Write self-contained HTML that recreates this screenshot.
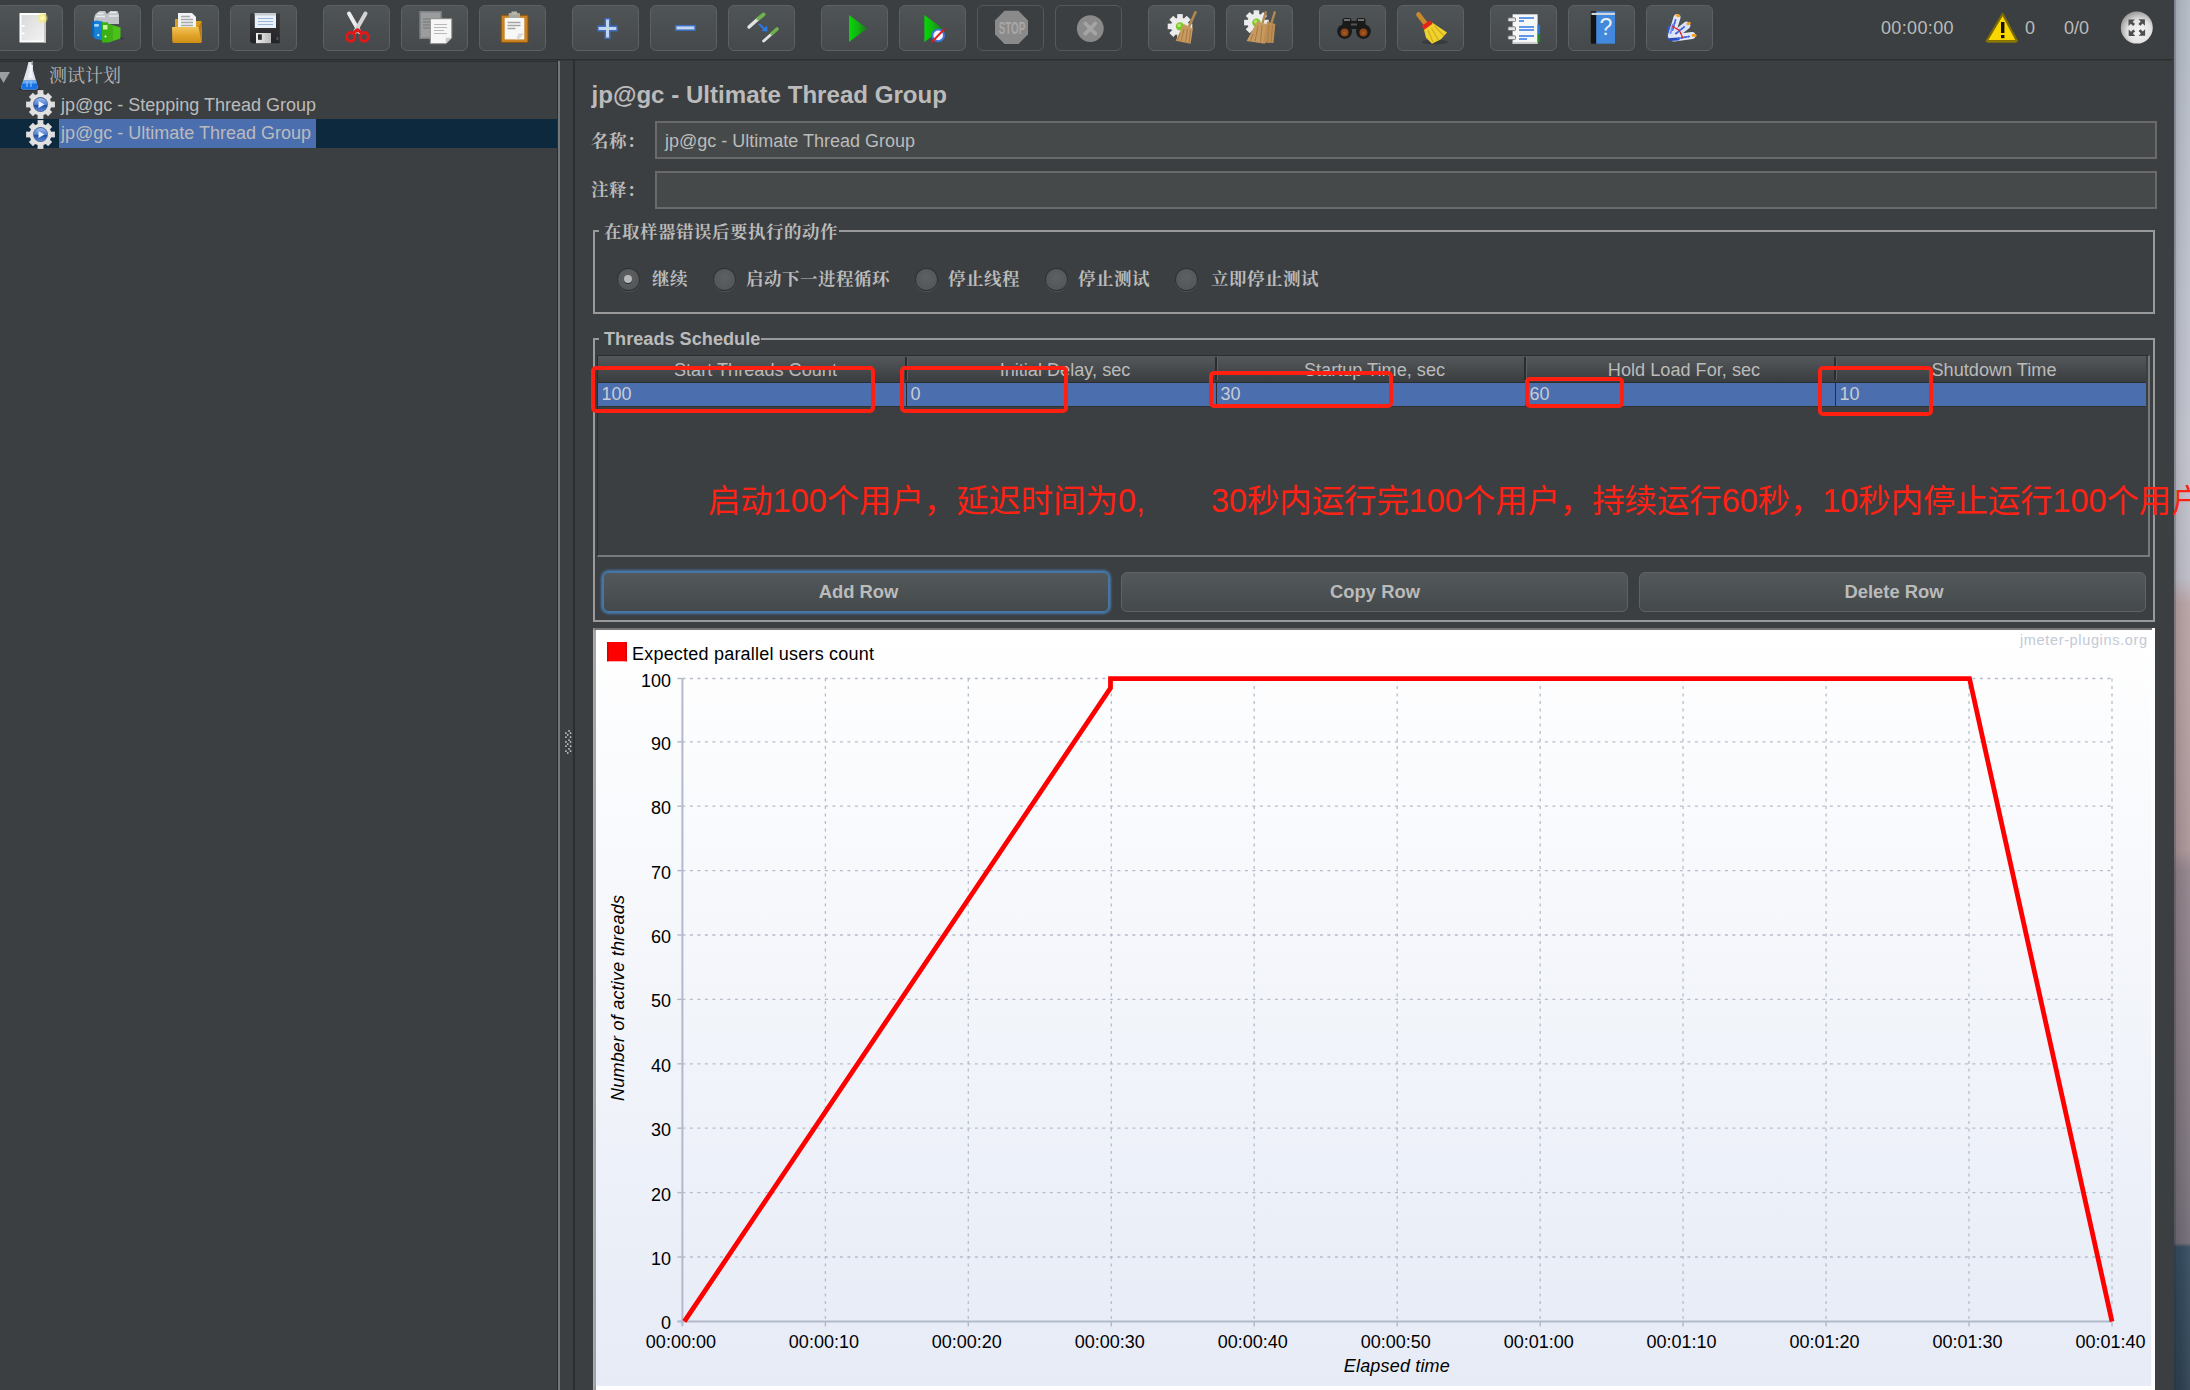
<!DOCTYPE html>
<html lang="zh-CN"><head><meta charset="utf-8"><title>JMeter - Ultimate Thread Group</title>
<style>
html,body{margin:0;padding:0;background:#3c3f41;}
body{width:2190px;height:1390px;overflow:hidden;position:relative;font-family:"Liberation Sans","Noto Sans CJK SC",sans-serif;font-size:18px;color:#bbbbbb;}
#app{position:absolute;left:0;top:0;width:2190px;height:1390px;overflow:hidden;background:#3c3f41;}
.abs{position:absolute;}
.t{position:absolute;white-space:nowrap;line-height:22px;height:22px;}
.cn{font-family:"Liberation Sans","Noto Serif CJK SC",serif;font-weight:700;font-size:17.5px;letter-spacing:.5px;}
.cnr{font-family:"Liberation Sans","Noto Serif CJK SC",serif;font-weight:400;}
.tb{position:absolute;top:5px;width:65px;height:44px;border:1px solid #5c6062;border-radius:6px;background:linear-gradient(#4f5456,#45494b);box-sizing:content-box;}
.tb svg{position:absolute;left:0;top:0;}
.field{position:absolute;left:655px;width:1498px;height:34px;border:2px solid #6a6a6a;background:#45494a;box-sizing:content-box;}
.gb{position:absolute;border:2px solid #9a9a9a;box-sizing:border-box;}
.gbt{position:absolute;background:#3c3f41;padding:0 1px 0 5px;white-space:nowrap;line-height:22px;}
.radio{position:absolute;width:21px;height:21px;border-radius:50%;background:radial-gradient(circle at 50% 40%,#5e6163,#505355);box-shadow:0 0 0 1px #2e3032, 0 1px 1px 1px rgba(90,94,96,.6);}
.radio.on::after{content:"";position:absolute;left:6.5px;top:6.5px;width:8px;height:8px;border-radius:50%;background:#b8b8b8;box-shadow:0 1px 0 #2a2a2a;}
.th{position:absolute;top:356px;height:26px;background:linear-gradient(#54585a,#3b3e40);text-align:center;line-height:27px;white-space:nowrap;}
.td{position:absolute;top:383px;height:23px;background:#4b6eaf;line-height:23px;white-space:nowrap;}
.btn{position:absolute;top:572px;height:40px;border-radius:6px;border:1px solid #5f6365;background:linear-gradient(#53585a,#44494b);text-align:center;font-weight:700;font-size:18.4px;line-height:37px;box-sizing:border-box;}
.red{position:absolute;border:4.8px solid #ff2012;border-radius:5px;box-sizing:border-box;}
.redt{position:absolute;color:#ff2214;font-family:"Liberation Sans","Noto Sans CJK SC",sans-serif;font-size:32.37px;white-space:nowrap;line-height:40px;}
</style></head>
<body><div id="app">
<div class="abs" style="left:2174px;top:0;width:16px;height:1390px;background:linear-gradient(#b3b9c3 0px,#bcc0ca 300px,#c0c1cb 450px,#bcbbc5 578px,#b8a2a3 604px,#b49e9f 700px,#aa9496 850px,#92838a 870px,#887b83 1000px,#7c737b 1150px,#716b75 1243px,#364c5e 1247px,#2e4151 1390px);"></div>
<div class="abs" style="left:2174px;top:0;width:16px;height:1390px;background:linear-gradient(90deg,rgba(10,20,40,.13),rgba(10,20,40,.04) 45%,rgba(255,255,255,.05));"></div>
<div class="abs" style="left:2174px;top:0;width:2px;height:1390px;background:rgba(40,44,52,.25);"></div>
<div class="abs" style="left:0;top:59px;width:2172px;height:1px;background:#2a2c2e;"></div><div class="abs" style="left:0;top:60px;width:2172px;height:1px;background:#35383a;"></div>
<div class="tb" style="left:-4px"><svg width="66" height="44" viewBox="0 0 66 44"><defs><linearGradient id="pg" x1="0" y1="0" x2="1" y2="1"><stop offset="0" stop-color="#d9d9d9"/><stop offset="1" stop-color="#f3f3f3"/></linearGradient><radialGradient id="st"><stop offset="0" stop-color="#fffde0"/><stop offset=".45" stop-color="#f6ee8a"/><stop offset="1" stop-color="#f3e96a" stop-opacity="0"/></radialGradient></defs><rect x="22.500" y="7" width="26.500" height="29.500" fill="#fdfdfd"/><rect x="24.500" y="9" width="22.500" height="25.500" fill="url(#pg)"/><rect x="47" y="8" width="2" height="28.500" fill="#c9c9c4"/><rect x="25" y="19" width="2.500" height="2" fill="#fff"/><rect x="25" y="26.500" width="2.500" height="2" fill="#fff"/><circle cx="45.400" cy="12.200" r="6" fill="url(#st)"/></svg></div>
<div class="tb" style="left:74px"><svg width="66" height="44" viewBox="0 0 66 44"><path d="M19 12 l1.500 -4 4 -3 h5.500 l2 3 1.500 -1.500 2 -1.500 h7 l1.500 3.500 v9.500 h-25z" fill="#bfc3c7"/><path d="M22.500 7.500 h6 M35 6.500 h6.500 M21 10.500 h9 M34 10 h9" stroke="#e9ebed" stroke-width="1.300"/><path d="M17.100 15.500 l4.500 -1 6.100 1 v19 l-7.500 -1.800 -3.100 -2.700z" fill="#1680d4"/><path d="M17.100 15.500 l2 -.5 v16.500 l-2 -1.500z" fill="#0f62ae"/><rect x="19.200" y="18" width="4.600" height="2.700" fill="#a6d4f6"/><rect x="22.300" y="28.200" width="1.900" height="1.900" fill="#d6eafa"/><path d="M27 16.300 h6.200 v20.200 h-6.200z" fill="#37b212"/><rect x="28" y="19" width="4.500" height="4.500" fill="#c9f2a2"/><circle cx="30.500" cy="30.600" r="1" fill="#fff"/><path d="M33.200 18 L45.500 21.400 V32.400 L33.200 36.500z" fill="#4bc21a"/><path d="M33.200 18 L38 19.300 V34.900 L33.200 36.500z" fill="#40b014"/><path d="M45.500 31 l4 1.500 -4 1.500z" fill="#2c2e30" opacity=".6"/></svg></div>
<div class="tb" style="left:152px"><svg width="66" height="44" viewBox="0 0 66 44"><defs><linearGradient id="fo" x1="0" y1="0" x2="0" y2="1"><stop offset="0" stop-color="#f0c55c"/><stop offset=".5" stop-color="#e2a52c"/><stop offset="1" stop-color="#cf8e14"/></linearGradient></defs><path d="M22 13 h6 l2 2 h18.500 v21 h-26.500z" fill="#d99a1e"/><path d="M25 7 h14 l4 4 v12 h-18z" fill="#f2f3f4"/><path d="M28 10.500h9M28 13.500h12M28 16.500h12M28 19.500h12" stroke="#a9a9a9" stroke-width="1.700"/><path d="M19 21 h26.500 l3 2 v13 q0 1 -1 1 h-26.500 q-1.500 0 -1.700 -1.500z" fill="url(#fo)"/><path d="M45.500 21 l3 -6 v21z" fill="#b87a10"/></svg></div>
<div class="tb" style="left:230px"><svg width="66" height="44" viewBox="0 0 66 44"><defs><linearGradient id="fl" x1="0" y1="0" x2="0" y2="1"><stop offset="0" stop-color="#3a3a3e"/><stop offset="1" stop-color="#232326"/></linearGradient><linearGradient id="mt" x1="0" y1="0" x2="1" y2="0"><stop offset="0" stop-color="#f0f0f0"/><stop offset="1" stop-color="#b8b8b8"/></linearGradient></defs><path d="M19 7.500 h29.800 v29.700 h-28 l-1.800 -1.800z" fill="url(#fl)"/><rect x="23.800" y="7" width="21.200" height="15" fill="#e9f0f8"/><rect x="23.800" y="7" width="21.200" height="2.500" fill="#c9ccd0"/><path d="M27 12.500h15M27 15.500h15M27 18.500h15" stroke="#9ab6d6" stroke-width="1.200"/><rect x="25" y="27" width="15" height="10.200" fill="url(#mt)"/><rect x="27" y="28.300" width="3.800" height="5.500" fill="#2a2a2d"/><rect x="45.500" y="31" width="1.800" height="3" fill="#55555a"/></svg></div>
<div class="tb" style="left:323px"><svg width="66" height="44" viewBox="0 0 66 44"><g stroke-linecap="round" fill="none"><path d="M25 7.500 L35.500 26" stroke="#ececec" stroke-width="4"/><path d="M41.500 7.500 L31 26" stroke="#d4d4d4" stroke-width="4"/><ellipse cx="26.700" cy="30.800" rx="4" ry="4.400" stroke="#e01818" stroke-width="3"/><ellipse cx="40.300" cy="30.800" rx="4" ry="4.400" stroke="#e01818" stroke-width="3"/><path d="M30 26.500 L33 24 M37 26.500 L34 24" stroke="#e01818" stroke-width="3.200"/></g></svg></div>
<div class="tb" style="left:401px"><svg width="66" height="44" viewBox="0 0 66 44"><rect x="17.300" y="5" width="22.500" height="28" fill="#7f8183"/><rect x="18.800" y="6.500" width="19.500" height="25" fill="#9a9c9e"/><path d="M21 13h8M21 16h8M21 19h8M21 22h8" stroke="#808284" stroke-width="1.300"/><path d="M28.300 12.700 h21.500 v19 l-6 6 h-15.500z" fill="#f6f6f6" stroke="#8a8a84" stroke-width="1"/><path d="M49.800 31.700 l-6 6 v-6z" fill="#c9c9c9"/><path d="M32 18.500h13M32 21.500h13M32 24.500h10M32 27.500h13" stroke="#b9b9b9" stroke-width="1.200"/></svg></div>
<div class="tb" style="left:479px"><svg width="66" height="44" viewBox="0 0 66 44"><rect x="21.200" y="9.200" width="26.800" height="27.300" rx="1.500" fill="#c98324" stroke="#8a5208" stroke-width="1"/><rect x="24.700" y="11.900" width="19.600" height="21.500" fill="#f7f7f7"/><rect x="28.600" y="7" width="11.400" height="5" rx="1" fill="#a8a89c"/><rect x="31.500" y="5.500" width="5.600" height="3" fill="#b8b8ac"/><path d="M27.500 16.500h13M27.500 19.500h13M27.500 22.500h8" stroke="#a4a4a4" stroke-width="1.700"/><path d="M44.300 27.400 l-6 6 h-2 l2 -6z" fill="#d9d9d6"/></svg></div>
<div class="tb" style="left:572px"><svg width="66" height="44" viewBox="0 0 66 44"><path d="M24.200 22.400 h20.600 M34.500 12 v21" stroke="#3c6fc4" stroke-width="6" fill="none"/><path d="M25.700 22.400 h17.600 M34.500 13.500 v18" stroke="#c3d6f0" stroke-width="3" fill="none"/></svg></div>
<div class="tb" style="left:650px"><svg width="66" height="44" viewBox="0 0 66 44"><path d="M24 21.900 h20.800" stroke="#3c6fc4" stroke-width="6" fill="none"/><path d="M25.500 21.900 h17.800" stroke="#c3d6f0" stroke-width="3" fill="none"/></svg></div>
<div class="tb" style="left:728px"><svg width="66" height="44" viewBox="0 0 66 44"><g stroke-linecap="round" fill="none"><path d="M20 21 L29 13" stroke="#e2e2e2" stroke-width="3.400"/><path d="M29.500 12.500 L34.500 8.500" stroke="#6fb24e" stroke-width="4"/><path d="M34.700 35 L42.500 28" stroke="#e2e2e2" stroke-width="3"/><path d="M43 27.500 L48 23" stroke="#6fb24e" stroke-width="3.600"/><path d="M30.500 18.500 L35.500 23" stroke="#2a7be8" stroke-width="1.800"/></g><path d="M38.500 25.500 l-6 -.5 5.500 -5.500z" fill="#2a7be8"/></svg></div>
<div class="tb" style="left:821px"><svg width="66" height="44" viewBox="0 0 66 44"><defs><linearGradient id="gr" x1="0" y1="0" x2="1" y2="0"><stop offset="0" stop-color="#06d806"/><stop offset=".5" stop-color="#12b012"/><stop offset="1" stop-color="#167a16"/></linearGradient></defs><path d="M27 9 L27 35.900 L45.200 22.400 Z" fill="url(#gr)"/></svg></div>
<div class="tb" style="left:899px"><svg width="66" height="44" viewBox="0 0 66 44"><defs><linearGradient id="gr2" x1="0" y1="0" x2="1" y2="0"><stop offset="0" stop-color="#06d806"/><stop offset=".5" stop-color="#12b012"/><stop offset="1" stop-color="#167a16"/></linearGradient></defs><path d="M24.400 9 L24.400 35.900 L42.600 22.400 Z" fill="url(#gr2)"/><circle cx="38.200" cy="29.400" r="5.800" fill="#f4f6fc" stroke="#3f74d6" stroke-width="2"/><path d="M31.800 36 L44.500 23" stroke="#e01c1c" stroke-width="1.800"/></svg></div>
<div class="tb" style="left:977px;background:none;border-color:#55595b"><svg width="66" height="44" viewBox="0 0 66 44"><path d="M26.500 4.800 h14 l9.500 9.700 v13.800 l-9.500 9.700 h-14 l-9.500 -9.700 v-13.800z" fill="#8a8a8a"/><text x="34" y="28" font-family="Liberation Sans,sans-serif" font-size="16" font-weight="700" fill="#a8a8a8" text-anchor="middle" textLength="26.500" lengthAdjust="spacingAndGlyphs">STOP</text></svg></div>
<div class="tb" style="left:1055px;background:none;border-color:#55595b"><svg width="66" height="44" viewBox="0 0 66 44"><circle cx="34.300" cy="22.600" r="13.400" fill="#8a8a8a"/><path d="M29.300 17.500 L39.300 27.700 M39.300 17.500 L29.300 27.700" stroke="#a4a4a4" stroke-width="3.800" stroke-linecap="round"/></svg></div>
<div class="tb" style="left:1148px"><svg width="66" height="44" viewBox="0 0 66 44"><g transform="translate(31,20.4)"><g fill="#ececec"><rect x="-2.800" y="-12.300" width="5.600" height="6" transform="rotate(0)"/><rect x="-2.800" y="-12.300" width="5.600" height="6" transform="rotate(45)"/><rect x="-2.800" y="-12.300" width="5.600" height="6" transform="rotate(90)"/><rect x="-2.800" y="-12.300" width="5.600" height="6" transform="rotate(135)"/><rect x="-2.800" y="-12.300" width="5.600" height="6" transform="rotate(180)"/><rect x="-2.800" y="-12.300" width="5.600" height="6" transform="rotate(225)"/><rect x="-2.800" y="-12.300" width="5.600" height="6" transform="rotate(270)"/><rect x="-2.800" y="-12.300" width="5.600" height="6" transform="rotate(315)"/></g><circle r="9" fill="#ececec"/><circle r="4.200" fill="#7cc62a"/><circle cx="-.8" cy="-1" r="1.800" fill="#b4e470"/></g><path d="M46.900 5.300 L39.500 22" stroke="#b08850" stroke-width="2.600"/><path d="M34.800 18.100 L43.900 22.600 L41.600 37.700 L26.600 34.700z" fill="#c79a62"/><path d="M31 27 l-2.500 7.500 M35 23 l-3 12.500 M38.500 23 l-2 14 M41.500 24 l-1.500 13" stroke="#a87a42" stroke-width="1"/></svg></div>
<div class="tb" style="left:1226px"><svg width="66" height="44" viewBox="0 0 66 44"><g transform="translate(29.4,16.6)"><g fill="#ececec"><rect x="-2.800" y="-12.300" width="5.600" height="6" transform="rotate(0)"/><rect x="-2.800" y="-12.300" width="5.600" height="6" transform="rotate(45)"/><rect x="-2.800" y="-12.300" width="5.600" height="6" transform="rotate(90)"/><rect x="-2.800" y="-12.300" width="5.600" height="6" transform="rotate(135)"/><rect x="-2.800" y="-12.300" width="5.600" height="6" transform="rotate(180)"/><rect x="-2.800" y="-12.300" width="5.600" height="6" transform="rotate(225)"/><rect x="-2.800" y="-12.300" width="5.600" height="6" transform="rotate(270)"/><rect x="-2.800" y="-12.300" width="5.600" height="6" transform="rotate(315)"/></g><circle r="9" fill="#ececec"/><circle r="4.200" fill="#7cc62a"/><circle cx="-.8" cy="-1" r="1.800" fill="#b4e470"/></g><path d="M39 5.300 L35.500 17" stroke="#b08850" stroke-width="2.400"/><path d="M48 5.300 L44.500 17" stroke="#b08850" stroke-width="2.400"/><path d="M30 15.500 L39.500 18 L38 37.700 L19.600 35z" fill="#c79a62"/><path d="M40 15.500 L48.300 18 L46.500 37 L36 36.500z" fill="#bd8e54"/><path d="M26 28 l-2.500 7 M31 20 l-3 15.500 M35 19 l-1.500 17.500 M42 19 l-1.500 17.500 M45.500 19 l-1.500 18" stroke="#a87a42" stroke-width="1"/></svg></div>
<div class="tb" style="left:1319px"><svg width="66" height="44" viewBox="0 0 66 44"><g fill="#1a1a1a"><rect x="22.500" y="12" width="9" height="9" rx="2.500"/><rect x="36.500" y="12" width="9" height="9" rx="2.500"/><rect x="29" y="15" width="10" height="8"/><circle cx="24.600" cy="25.600" r="7.400"/><circle cx="43.400" cy="25.600" r="7.400"/></g><path d="M24 14 h6 M38 14 h6" stroke="#8a8a8a" stroke-width="1.500"/><path d="M31 18.500 h6" stroke="#555" stroke-width="2"/><circle cx="24.600" cy="26.500" r="4" fill="#8e4718"/><circle cx="43.400" cy="26.500" r="4" fill="#8e4718"/><circle cx="24.600" cy="27" r="1.800" fill="#a85a22"/><circle cx="43.400" cy="27" r="1.800" fill="#a85a22"/></svg></div>
<div class="tb" style="left:1397px"><svg width="66" height="44" viewBox="0 0 66 44"><ellipse cx="37" cy="36" rx="13" ry="2.500" fill="#2e3032" opacity=".55"/><path d="M20.500 8.500 L28.500 19" stroke="#c88a2c" stroke-width="4.600" stroke-linecap="round"/><path d="M25.700 22.600 L34 16.600 L49 26.400 L43 33.200 L34 37.700 L28 31.700z" fill="#f0d22e"/><path d="M30 24 l5 12 M33.500 22 l7 12.500 M36.500 20 l9.500 10" stroke="#d2ae18" stroke-width="1.200"/><path d="M25 21.900 L33.200 15.900" stroke="#e42418" stroke-width="4.400"/></svg></div>
<div class="tb" style="left:1490px"><svg width="66" height="44" viewBox="0 0 66 44"><rect x="21.600" y="8.300" width="25" height="29.400" fill="#f7f7f7"/><rect x="21.600" y="36" width="25" height="1.700" fill="#cfcfcf"/><rect x="46.500" y="18.900" width="2.600" height="9" fill="#2b74dc"/><rect x="46.500" y="27.900" width="2.600" height="8.300" fill="#1f8a1f"/><g stroke="#2f7be8" stroke-width="1.300"><path d="M28 12h15M28 15h5M28 21h15M28 24h15M28 30h15M28 33h8"/></g><g fill="#e4e4e4" stroke="#666" stroke-width=".8"><rect x="17" y="11.800" width="7.500" height="3.800" rx="1"/><rect x="17" y="20.800" width="7.500" height="3.800" rx="1"/><rect x="17" y="29.800" width="7.500" height="3.800" rx="1"/></g></svg></div>
<div class="tb" style="left:1568px"><svg width="66" height="44" viewBox="0 0 66 44"><rect x="27" y="5.300" width="19" height="32.400" fill="#4288dc"/><rect x="21.800" y="5.300" width="5.400" height="32.400" fill="#141414"/><rect x="22.500" y="6.800" width="23.400" height="2.200" fill="#cfd6de"/><text x="36.800" y="29.400" font-family="Liberation Sans,sans-serif" font-size="23" fill="#e6effb" text-anchor="middle">?</text><rect x="35.600" y="30.800" width="2.400" height="2.400" fill="#d5e4f8" opacity="0"/></svg></div>
<div class="tb" style="left:1646px"><svg width="66" height="44" viewBox="0 0 66 44"><g stroke-linecap="round" fill="none"><path d="M22.500 31 L23 22" stroke="#3558cc" stroke-width="5"/><path d="M24.500 29.500 L30 11.500" stroke="#e2e8f8" stroke-width="7"/><path d="M26.500 30 L39.500 19.500" stroke="#d9e1f6" stroke-width="7.500"/><path d="M27 32 L45 29.500" stroke="#e4e9f8" stroke-width="7"/><path d="M23.500 33.500 L31 33" stroke="#2a4cc0" stroke-width="3.200"/><path d="M25.500 24 L28.500 14 M29 27.500 L37 21 M31 32.500 L42 30.500" stroke="#3f66de" stroke-width="2" stroke-dasharray="1.600 1.800"/><path d="M23.500 27 L26 18" stroke="#6f8fe8" stroke-width="2" stroke-dasharray="1.500 2"/><path d="M25.500 20.500 L32.500 24.500 L36 32.500" stroke="#d62a2a" stroke-width="1.500" stroke-dasharray="2 1.400"/><path d="M30.300 9.500 l1.400 .4 M40.800 17.800 l1.600 -.6 M46 29.300 l2.300 .2" stroke="#f2a020" stroke-width="2.800"/></g></svg></div>
<div class="t" style="left:1881px;top:17px;letter-spacing:.35px;">00:00:00</div>
<svg class="abs" style="left:1984px;top:11px;" width="36" height="34" viewBox="0 0 36 34"><path d="M18.700 3 L33 30 H2.500 Z" fill="#f8d800" stroke="#7e6c00" stroke-width="2.200" stroke-linejoin="round"/><path d="M3 30.500 h29.500" stroke="#8a7800" stroke-width="2.400"/><rect x="17" y="11" width="3.400" height="11" fill="#111"/><rect x="17" y="24" width="3.400" height="3.200" fill="#111"/></svg>
<div class="t" style="left:2025px;top:17px;">0</div>
<div class="t" style="left:2064px;top:17px;">0/0</div>
<svg class="abs" style="left:2119px;top:10px;" width="36" height="36" viewBox="0 0 36 36"><defs><radialGradient id="cg2" cx=".58" cy=".62" r=".62"><stop offset="0" stop-color="#f6f6f6"/><stop offset=".6" stop-color="#e2e2e2"/><stop offset="1" stop-color="#9e9e9e"/></radialGradient></defs><circle cx="17.800" cy="17.600" r="16" fill="url(#cg2)"/><g fill="#4e4e4e"><path d="M9.500 9.500 h6.500 l-2.300 2.300 2.300 2.300 -1.900 1.900 -2.300 -2.300 -2.300 2.300z" transform="rotate(0 17.800 17.600)"/><path d="M9.500 9.500 h6.500 l-2.300 2.300 2.300 2.300 -1.900 1.900 -2.300 -2.300 -2.300 2.300z" transform="rotate(90 17.800 17.600)"/><path d="M9.500 9.500 h6.500 l-2.300 2.300 2.300 2.300 -1.900 1.900 -2.300 -2.300 -2.300 2.300z" transform="rotate(180 17.800 17.600)"/><path d="M9.500 9.500 h6.500 l-2.300 2.300 2.300 2.300 -1.900 1.900 -2.300 -2.300 -2.300 2.300z" transform="rotate(270 17.800 17.600)"/></g></svg>
<div class="abs" style="left:0;top:61px;width:557px;height:1px;background:#2b2d2f;"></div>
<div class="abs" style="left:557px;top:61px;width:1px;height:1329px;background:#2b2d2f;"></div>
<div class="abs" style="left:558px;top:61px;width:2px;height:1329px;background:#73777a;"></div>
<div class="abs" style="left:573px;top:60px;width:2px;height:1330px;background:#2b2d2f;"></div>
<svg class="abs" style="left:563px;top:728px;" width="10" height="28" viewBox="0 0 10 28"><rect x="5.3" y="2.2" width="1.500" height="1.500" fill="#d4d4d4"/><rect x="2.2" y="4.4" width="1.500" height="1.500" fill="#d4d4d4"/><rect x="6.8" y="4.4" width="1.500" height="1.500" fill="#d4d4d4"/><rect x="4" y="6.2" width="1.500" height="1.500" fill="#d4d4d4"/><rect x="2.2" y="8.4" width="1.500" height="1.500" fill="#d4d4d4"/><rect x="6.8" y="8.4" width="1.500" height="1.500" fill="#d4d4d4"/><rect x="5.3" y="11.4" width="1.500" height="1.500" fill="#d4d4d4"/><rect x="2.2" y="13.2" width="1.500" height="1.500" fill="#d4d4d4"/><rect x="6.8" y="13.2" width="1.500" height="1.500" fill="#d4d4d4"/><rect x="4" y="15.4" width="1.500" height="1.500" fill="#d4d4d4"/><rect x="2.2" y="17.4" width="1.500" height="1.500" fill="#d4d4d4"/><rect x="6.8" y="17.4" width="1.500" height="1.500" fill="#d4d4d4"/><rect x="5.3" y="20.2" width="1.500" height="1.500" fill="#d4d4d4"/><rect x="2.2" y="22.4" width="1.500" height="1.500" fill="#d4d4d4"/><rect x="6.8" y="22.4" width="1.500" height="1.500" fill="#d4d4d4"/><rect x="4" y="24.2" width="1.500" height="1.500" fill="#d4d4d4"/></svg>
<div class="abs" style="left:0;top:119px;width:557px;height:29px;background:#0d293e;"></div>
<div class="abs" style="left:59px;top:119px;width:257px;height:29px;background:#4b6eaf;"></div>
<svg class="abs" style="left:0;top:70px;" width="12" height="14" viewBox="0 0 12 14"><path d="M-3 2 h13 l-6.500 11z" fill="#9b9ea0"/></svg>
<svg class="abs" style="left:17px;top:61px;" width="24" height="30" viewBox="0 0 24 30"><ellipse cx="12" cy="28.300" rx="11" ry="1.500" fill="#2a2c2e"/><path d="M11.500 1 h4.500 v8 l4.800 17 q.4 2.400 -2 2.400 h-12.600 q-2.400 0 -2 -2.400 l5.300 -17 z" fill="#dfe3ee"/><path d="M12.500 3 h2.500 v8 l1 6 h-5 l1.500 -6z" fill="#f6f8fc" opacity=".8"/><path d="M6.400 19.500 h12.700 l1.700 6.500 q.4 2.400 -2 2.400 h-12.600 q-2.400 0 -2 -2.400z" fill="#1472e6"/><path d="M6.400 19.500 h12.700 l.8 3 h-14.400z" fill="#6aa6f0"/><path d="M9 20 h2 v6 h-2z M13 20 h2 v6 h-2z" fill="#8cbcf6" opacity=".6"/><rect x="14.500" y="0" width="1.600" height="4" fill="#8a8e96"/></svg>
<svg class="abs" style="left:25px;top:89px;" width="31" height="31" viewBox="-15.500 -15.500 31 31"><defs><linearGradient id="bl89" x1="0" y1="0" x2="0" y2="1"><stop offset="0" stop-color="#9dbdee"/><stop offset=".5" stop-color="#4f7fd0"/><stop offset=".55" stop-color="#1f4a9a"/><stop offset="1" stop-color="#5a8ade"/></linearGradient></defs><g fill="#dedede"><rect x="-2.900" y="-14.400" width="5.800" height="6" transform="rotate(0)"/><rect x="-2.900" y="-13.600" width="5.800" height="6" transform="rotate(45)"/><rect x="-2.900" y="-14.400" width="5.800" height="6" transform="rotate(90)"/><rect x="-2.900" y="-13.600" width="5.800" height="6" transform="rotate(135)"/><rect x="-2.900" y="-14.400" width="5.800" height="6" transform="rotate(180)"/><rect x="-2.900" y="-13.600" width="5.800" height="6" transform="rotate(225)"/><rect x="-2.900" y="-14.400" width="5.800" height="6" transform="rotate(270)"/><rect x="-2.900" y="-13.600" width="5.800" height="6" transform="rotate(315)"/></g><circle r="10.800" fill="#e2e2e2"/><circle r="7.400" fill="#44649a"/><circle r="6.600" fill="url(#bl89)"/><path d="M-2 -3.600 L4 0 L-2 3.600z" fill="#eef3fc"/></svg>
<svg class="abs" style="left:25px;top:118.5px;" width="31" height="31" viewBox="-15.500 -15.500 31 31"><defs><linearGradient id="bl118.5" x1="0" y1="0" x2="0" y2="1"><stop offset="0" stop-color="#9dbdee"/><stop offset=".5" stop-color="#4f7fd0"/><stop offset=".55" stop-color="#1f4a9a"/><stop offset="1" stop-color="#5a8ade"/></linearGradient></defs><g fill="#dedede"><rect x="-2.900" y="-14.400" width="5.800" height="6" transform="rotate(0)"/><rect x="-2.900" y="-13.600" width="5.800" height="6" transform="rotate(45)"/><rect x="-2.900" y="-14.400" width="5.800" height="6" transform="rotate(90)"/><rect x="-2.900" y="-13.600" width="5.800" height="6" transform="rotate(135)"/><rect x="-2.900" y="-14.400" width="5.800" height="6" transform="rotate(180)"/><rect x="-2.900" y="-13.600" width="5.800" height="6" transform="rotate(225)"/><rect x="-2.900" y="-14.400" width="5.800" height="6" transform="rotate(270)"/><rect x="-2.900" y="-13.600" width="5.800" height="6" transform="rotate(315)"/></g><circle r="10.800" fill="#e2e2e2"/><circle r="7.400" fill="#44649a"/><circle r="6.600" fill="url(#bl118.5)"/><path d="M-2 -3.600 L4 0 L-2 3.600z" fill="#eef3fc"/></svg>
<div class="t cnr" style="left:49px;top:65px;color:#b4b4b4;">测试计划</div>
<div class="t" style="left:61px;top:94px;">jp@gc - Stepping Thread Group</div>
<div class="t" style="left:61px;top:122px;">jp@gc - Ultimate Thread Group</div>
<div class="t" style="left:591.5px;top:81px;font-size:24.1px;font-weight:700;line-height:28px;height:28px;">jp@gc - Ultimate Thread Group</div>
<div class="t cn" style="left:591px;top:130px;">名称：</div>
<div class="field" style="top:121px;"><div class="t" style="left:8px;top:7px;">jp@gc - Ultimate Thread Group</div></div>
<div class="t cn" style="left:591px;top:179px;">注释：</div>
<div class="field" style="top:171px;"></div>
<div class="gb" style="left:593px;top:230px;width:1562px;height:84px;"></div>
<div class="gbt cn" style="left:599px;top:221px;">在取样器错误后要执行的动作</div>
<div class="radio on" style="left:617.5px;top:268.5px;"></div>
<div class="t cn" style="left:652px;top:268px;">继续</div>
<div class="radio" style="left:713.5px;top:268.5px;"></div>
<div class="t cn" style="left:746px;top:268px;">启动下一进程循环</div>
<div class="radio" style="left:915.5px;top:268.5px;"></div>
<div class="t cn" style="left:948px;top:268px;">停止线程</div>
<div class="radio" style="left:1045.5px;top:268.5px;"></div>
<div class="t cn" style="left:1078px;top:268px;">停止测试</div>
<div class="radio" style="left:1175.5px;top:268.5px;"></div>
<div class="t cn" style="left:1211px;top:268px;">立即停止测试</div>
<div class="gb" style="left:593px;top:338px;width:1562px;height:284px;"></div>
<div class="gbt" style="left:599px;top:328px;font-weight:700;font-size:18.15px;">Threads Schedule</div>
<div class="abs" style="left:597px;top:355px;width:1553px;height:202px;box-sizing:border-box;border:1px solid #2b2d2f;border-right:2px solid #777a7c;border-bottom:2px solid #777a7c;"></div>
<div class="abs" style="left:598px;top:356px;width:1548px;height:26px;background:linear-gradient(#54585a,#3a3d3f);"></div>
<div class="abs" style="left:598px;top:382px;width:1548px;height:1px;background:#2b2d2f;"></div>
<div class="abs" style="left:598px;top:383px;width:1548px;height:23px;background:#4b6eaf;"></div><div class="abs" style="left:598px;top:406px;width:1548px;height:1px;background:#2f3133;"></div>
<div class="t" style="left:598px;top:359px;width:309px;text-align:center;font-size:18.15px;padding-left:6px;box-sizing:border-box;">Start Threads Count</div>
<div class="t" style="left:601.5px;top:383px;color:#c8ccd4;">100</div>
<div class="t" style="left:907px;top:359px;width:310px;text-align:center;font-size:18.15px;padding-left:6px;box-sizing:border-box;">Initial Delay, sec</div>
<div class="t" style="left:910.5px;top:383px;color:#c8ccd4;">0</div>
<div class="abs" style="left:905.4px;top:357px;width:1.7px;height:23px;background:#2a2c2e;"></div><div class="abs" style="left:907.1px;top:357px;width:1.2px;height:23px;background:#5c6062;"></div>
<div class="abs" style="left:906px;top:383px;width:1px;height:23px;background:#2b2d2f;"></div>
<div class="t" style="left:1217px;top:359px;width:309px;text-align:center;font-size:18.15px;padding-left:6px;box-sizing:border-box;">Startup Time, sec</div>
<div class="t" style="left:1220.5px;top:383px;color:#c8ccd4;">30</div>
<div class="abs" style="left:1215.4px;top:357px;width:1.7px;height:23px;background:#2a2c2e;"></div><div class="abs" style="left:1217.1px;top:357px;width:1.2px;height:23px;background:#5c6062;"></div>
<div class="abs" style="left:1216px;top:383px;width:1px;height:23px;background:#2b2d2f;"></div>
<div class="t" style="left:1526px;top:359px;width:310px;text-align:center;font-size:18.15px;padding-left:6px;box-sizing:border-box;">Hold Load For, sec</div>
<div class="t" style="left:1529.5px;top:383px;color:#c8ccd4;">60</div>
<div class="abs" style="left:1524.4px;top:357px;width:1.7px;height:23px;background:#2a2c2e;"></div><div class="abs" style="left:1526.1px;top:357px;width:1.2px;height:23px;background:#5c6062;"></div>
<div class="abs" style="left:1525px;top:383px;width:1px;height:23px;background:#2b2d2f;"></div>
<div class="t" style="left:1836px;top:359px;width:310px;text-align:center;font-size:18.15px;padding-left:6px;box-sizing:border-box;">Shutdown Time</div>
<div class="t" style="left:1839.5px;top:383px;color:#c8ccd4;">10</div>
<div class="abs" style="left:1834.4px;top:357px;width:1.7px;height:23px;background:#2a2c2e;"></div><div class="abs" style="left:1836.1px;top:357px;width:1.2px;height:23px;background:#5c6062;"></div>
<div class="abs" style="left:1835px;top:383px;width:1px;height:23px;background:#2b2d2f;"></div>
<div class="btn" style="left:603px;width:506px;box-shadow:0 0 0 1.5px #4676a6,0 0 1.5px 2.5px rgba(70,118,166,.4);border-color:#4676a6;padding-left:5px;">Add Row</div>
<div class="btn" style="left:1121px;width:507px;padding-left:1px;">Copy Row</div>
<div class="btn" style="left:1639px;width:507px;padding-left:3px;">Delete Row</div>
<svg class="abs" style="left:593px;top:628px;" width="1562" height="762" viewBox="593 628 1562 762" font-family="Liberation Sans, sans-serif" font-size="18"><defs><linearGradient id="cg" x1="0" y1="0" x2="0" y2="1"><stop offset="0" stop-color="#ffffff"/><stop offset="1" stop-color="#e6ebf6"/></linearGradient></defs><rect x="593.2" y="628" width="1561.8" height="762" fill="#ffffff"/><rect x="593.2" y="628" width="1558.8" height="2.100" fill="#757779"/><rect x="593.2" y="628.4" width="1.300" height="761.6" fill="#a2a2a2"/><rect x="594.500" y="628.4" width="1.300" height="761.6" fill="#747678"/><rect x="595.800" y="630.100" width="1555.400" height="755.800" fill="url(#cg)"/><text x="671" y="1329.4" text-anchor="end" fill="#000">0</text><path d="M677.4 1321.4 H682.4" stroke="#b3b8c6" stroke-width="1.4"/><path d="M682.4 1257.0 H2112.0" stroke="#b6bccb" stroke-width="1.300" stroke-dasharray="3 4.5" fill="none"/><text x="671" y="1265.0" text-anchor="end" fill="#000">10</text><path d="M677.4 1257.0 H682.4" stroke="#b3b8c6" stroke-width="1.4"/><path d="M682.4 1192.6 H2112.0" stroke="#b6bccb" stroke-width="1.300" stroke-dasharray="3 4.5" fill="none"/><text x="671" y="1200.6" text-anchor="end" fill="#000">20</text><path d="M677.4 1192.6 H682.4" stroke="#b3b8c6" stroke-width="1.4"/><path d="M682.4 1128.2 H2112.0" stroke="#b6bccb" stroke-width="1.300" stroke-dasharray="3 4.5" fill="none"/><text x="671" y="1136.2" text-anchor="end" fill="#000">30</text><path d="M677.4 1128.2 H682.4" stroke="#b3b8c6" stroke-width="1.4"/><path d="M682.4 1063.8 H2112.0" stroke="#b6bccb" stroke-width="1.300" stroke-dasharray="3 4.5" fill="none"/><text x="671" y="1071.8" text-anchor="end" fill="#000">40</text><path d="M677.4 1063.8 H682.4" stroke="#b3b8c6" stroke-width="1.4"/><path d="M682.4 999.4 H2112.0" stroke="#b6bccb" stroke-width="1.300" stroke-dasharray="3 4.5" fill="none"/><text x="671" y="1007.4" text-anchor="end" fill="#000">50</text><path d="M677.4 999.4 H682.4" stroke="#b3b8c6" stroke-width="1.4"/><path d="M682.4 935.0 H2112.0" stroke="#b6bccb" stroke-width="1.300" stroke-dasharray="3 4.5" fill="none"/><text x="671" y="943.0" text-anchor="end" fill="#000">60</text><path d="M677.4 935.0 H682.4" stroke="#b3b8c6" stroke-width="1.4"/><path d="M682.4 870.6 H2112.0" stroke="#b6bccb" stroke-width="1.300" stroke-dasharray="3 4.5" fill="none"/><text x="671" y="878.6" text-anchor="end" fill="#000">70</text><path d="M677.4 870.6 H682.4" stroke="#b3b8c6" stroke-width="1.4"/><path d="M682.4 806.2 H2112.0" stroke="#b6bccb" stroke-width="1.300" stroke-dasharray="3 4.5" fill="none"/><text x="671" y="814.2" text-anchor="end" fill="#000">80</text><path d="M677.4 806.2 H682.4" stroke="#b3b8c6" stroke-width="1.4"/><path d="M682.4 741.8 H2112.0" stroke="#b6bccb" stroke-width="1.300" stroke-dasharray="3 4.5" fill="none"/><text x="671" y="749.8" text-anchor="end" fill="#000">90</text><path d="M677.4 741.8 H682.4" stroke="#b3b8c6" stroke-width="1.4"/><path d="M682.4 678.5 H2112.0" stroke="#b6bccb" stroke-width="1.300" stroke-dasharray="3 4.5" fill="none"/><text x="671" y="686.5" text-anchor="end" fill="#000">100</text><path d="M677.4 678.5 H682.4" stroke="#b3b8c6" stroke-width="1.4"/><path d="M682.4 1321.4 V1326.4" stroke="#b3b8c6" stroke-width="1.4"/><text x="680.9" y="1348" text-anchor="middle" fill="#000">00:00:00</text><path d="M825.4 678.5 V1321.4" stroke="#b6bccb" stroke-width="1.300" stroke-dasharray="3 4.5" fill="none"/><path d="M825.4 1321.4 V1326.4" stroke="#b3b8c6" stroke-width="1.4"/><text x="823.9" y="1348" text-anchor="middle" fill="#000">00:00:10</text><path d="M968.3 678.5 V1321.4" stroke="#b6bccb" stroke-width="1.300" stroke-dasharray="3 4.5" fill="none"/><path d="M968.3 1321.4 V1326.4" stroke="#b3b8c6" stroke-width="1.4"/><text x="966.8" y="1348" text-anchor="middle" fill="#000">00:00:20</text><path d="M1111.3 678.5 V1321.4" stroke="#b6bccb" stroke-width="1.300" stroke-dasharray="3 4.5" fill="none"/><path d="M1111.3 1321.4 V1326.4" stroke="#b3b8c6" stroke-width="1.4"/><text x="1109.8" y="1348" text-anchor="middle" fill="#000">00:00:30</text><path d="M1254.2 678.5 V1321.4" stroke="#b6bccb" stroke-width="1.300" stroke-dasharray="3 4.5" fill="none"/><path d="M1254.2 1321.4 V1326.4" stroke="#b3b8c6" stroke-width="1.4"/><text x="1252.7" y="1348" text-anchor="middle" fill="#000">00:00:40</text><path d="M1397.2 678.5 V1321.4" stroke="#b6bccb" stroke-width="1.300" stroke-dasharray="3 4.5" fill="none"/><path d="M1397.2 1321.4 V1326.4" stroke="#b3b8c6" stroke-width="1.4"/><text x="1395.7" y="1348" text-anchor="middle" fill="#000">00:00:50</text><path d="M1540.2 678.5 V1321.4" stroke="#b6bccb" stroke-width="1.300" stroke-dasharray="3 4.5" fill="none"/><path d="M1540.2 1321.4 V1326.4" stroke="#b3b8c6" stroke-width="1.4"/><text x="1538.7" y="1348" text-anchor="middle" fill="#000">00:01:00</text><path d="M1683.1 678.5 V1321.4" stroke="#b6bccb" stroke-width="1.300" stroke-dasharray="3 4.5" fill="none"/><path d="M1683.1 1321.4 V1326.4" stroke="#b3b8c6" stroke-width="1.4"/><text x="1681.6" y="1348" text-anchor="middle" fill="#000">00:01:10</text><path d="M1826.1 678.5 V1321.4" stroke="#b6bccb" stroke-width="1.300" stroke-dasharray="3 4.5" fill="none"/><path d="M1826.1 1321.4 V1326.4" stroke="#b3b8c6" stroke-width="1.4"/><text x="1824.6" y="1348" text-anchor="middle" fill="#000">00:01:20</text><path d="M1969.0 678.5 V1321.4" stroke="#b6bccb" stroke-width="1.300" stroke-dasharray="3 4.5" fill="none"/><path d="M1969.0 1321.4 V1326.4" stroke="#b3b8c6" stroke-width="1.4"/><text x="1967.5" y="1348" text-anchor="middle" fill="#000">00:01:30</text><path d="M2112.0 678.5 V1321.4" stroke="#b6bccb" stroke-width="1.300" stroke-dasharray="3 4.5" fill="none"/><path d="M2112.0 1321.4 V1326.4" stroke="#b3b8c6" stroke-width="1.4"/><text x="2110.5" y="1348" text-anchor="middle" fill="#000">00:01:40</text><path d="M682.4 678.5 V1325.4 M677.4 1321.4 H2112.0" stroke="#b2b9cc" stroke-width="2" fill="none"/><path d="M684.4 1321.4 L1110.5 688.0 V678.6 H1969.5 L2112.0 1321.4" stroke="#ff0000" stroke-width="4.800" fill="none" stroke-linejoin="miter"/><rect x="607" y="642" width="20" height="19.300" fill="#ff0000"/><rect x="607" y="642" width="1.500" height="19.300" fill="#d80000"/><rect x="625.500" y="642" width="1.500" height="19.300" fill="#d80000"/><text x="632" y="659.500" fill="#000" textLength="242" lengthAdjust="spacing">Expected parallel users count</text><text x="2147" y="645" fill="#c3c9d6" font-size="14.500" text-anchor="end" textLength="127" lengthAdjust="spacing">jmeter-plugins.org</text><text x="1396.800" y="1372" fill="#000" font-style="italic" text-anchor="middle" font-size="18" textLength="106" lengthAdjust="spacing">Elapsed time</text><text transform="translate(623.5,998) rotate(-90)" fill="#000" font-style="italic" text-anchor="middle" font-size="18" textLength="206" lengthAdjust="spacing">Number of active threads</text></svg>
<div class="red" style="left:590.5px;top:366.3px;width:284.0px;height:47.0px;"></div>
<div class="red" style="left:899.5px;top:366.2px;width:168.79999999999995px;height:47.0px;"></div>
<div class="red" style="left:1208.5px;top:371.2px;width:184.70000000000005px;height:37.10000000000002px;"></div>
<div class="red" style="left:1524.6px;top:377px;width:99.60000000000014px;height:31.399999999999977px;"></div>
<div class="red" style="left:1818.4px;top:366.2px;width:115.09999999999991px;height:50.0px;"></div>
<div class="redt" style="left:708px;top:481px;">启动100个用户，延迟时间为0,</div>
<div class="redt" style="left:1211px;top:481px;">30秒内运行完100个用户，持续运行60秒，10秒内停止运行100个用户</div>
</div></body></html>
